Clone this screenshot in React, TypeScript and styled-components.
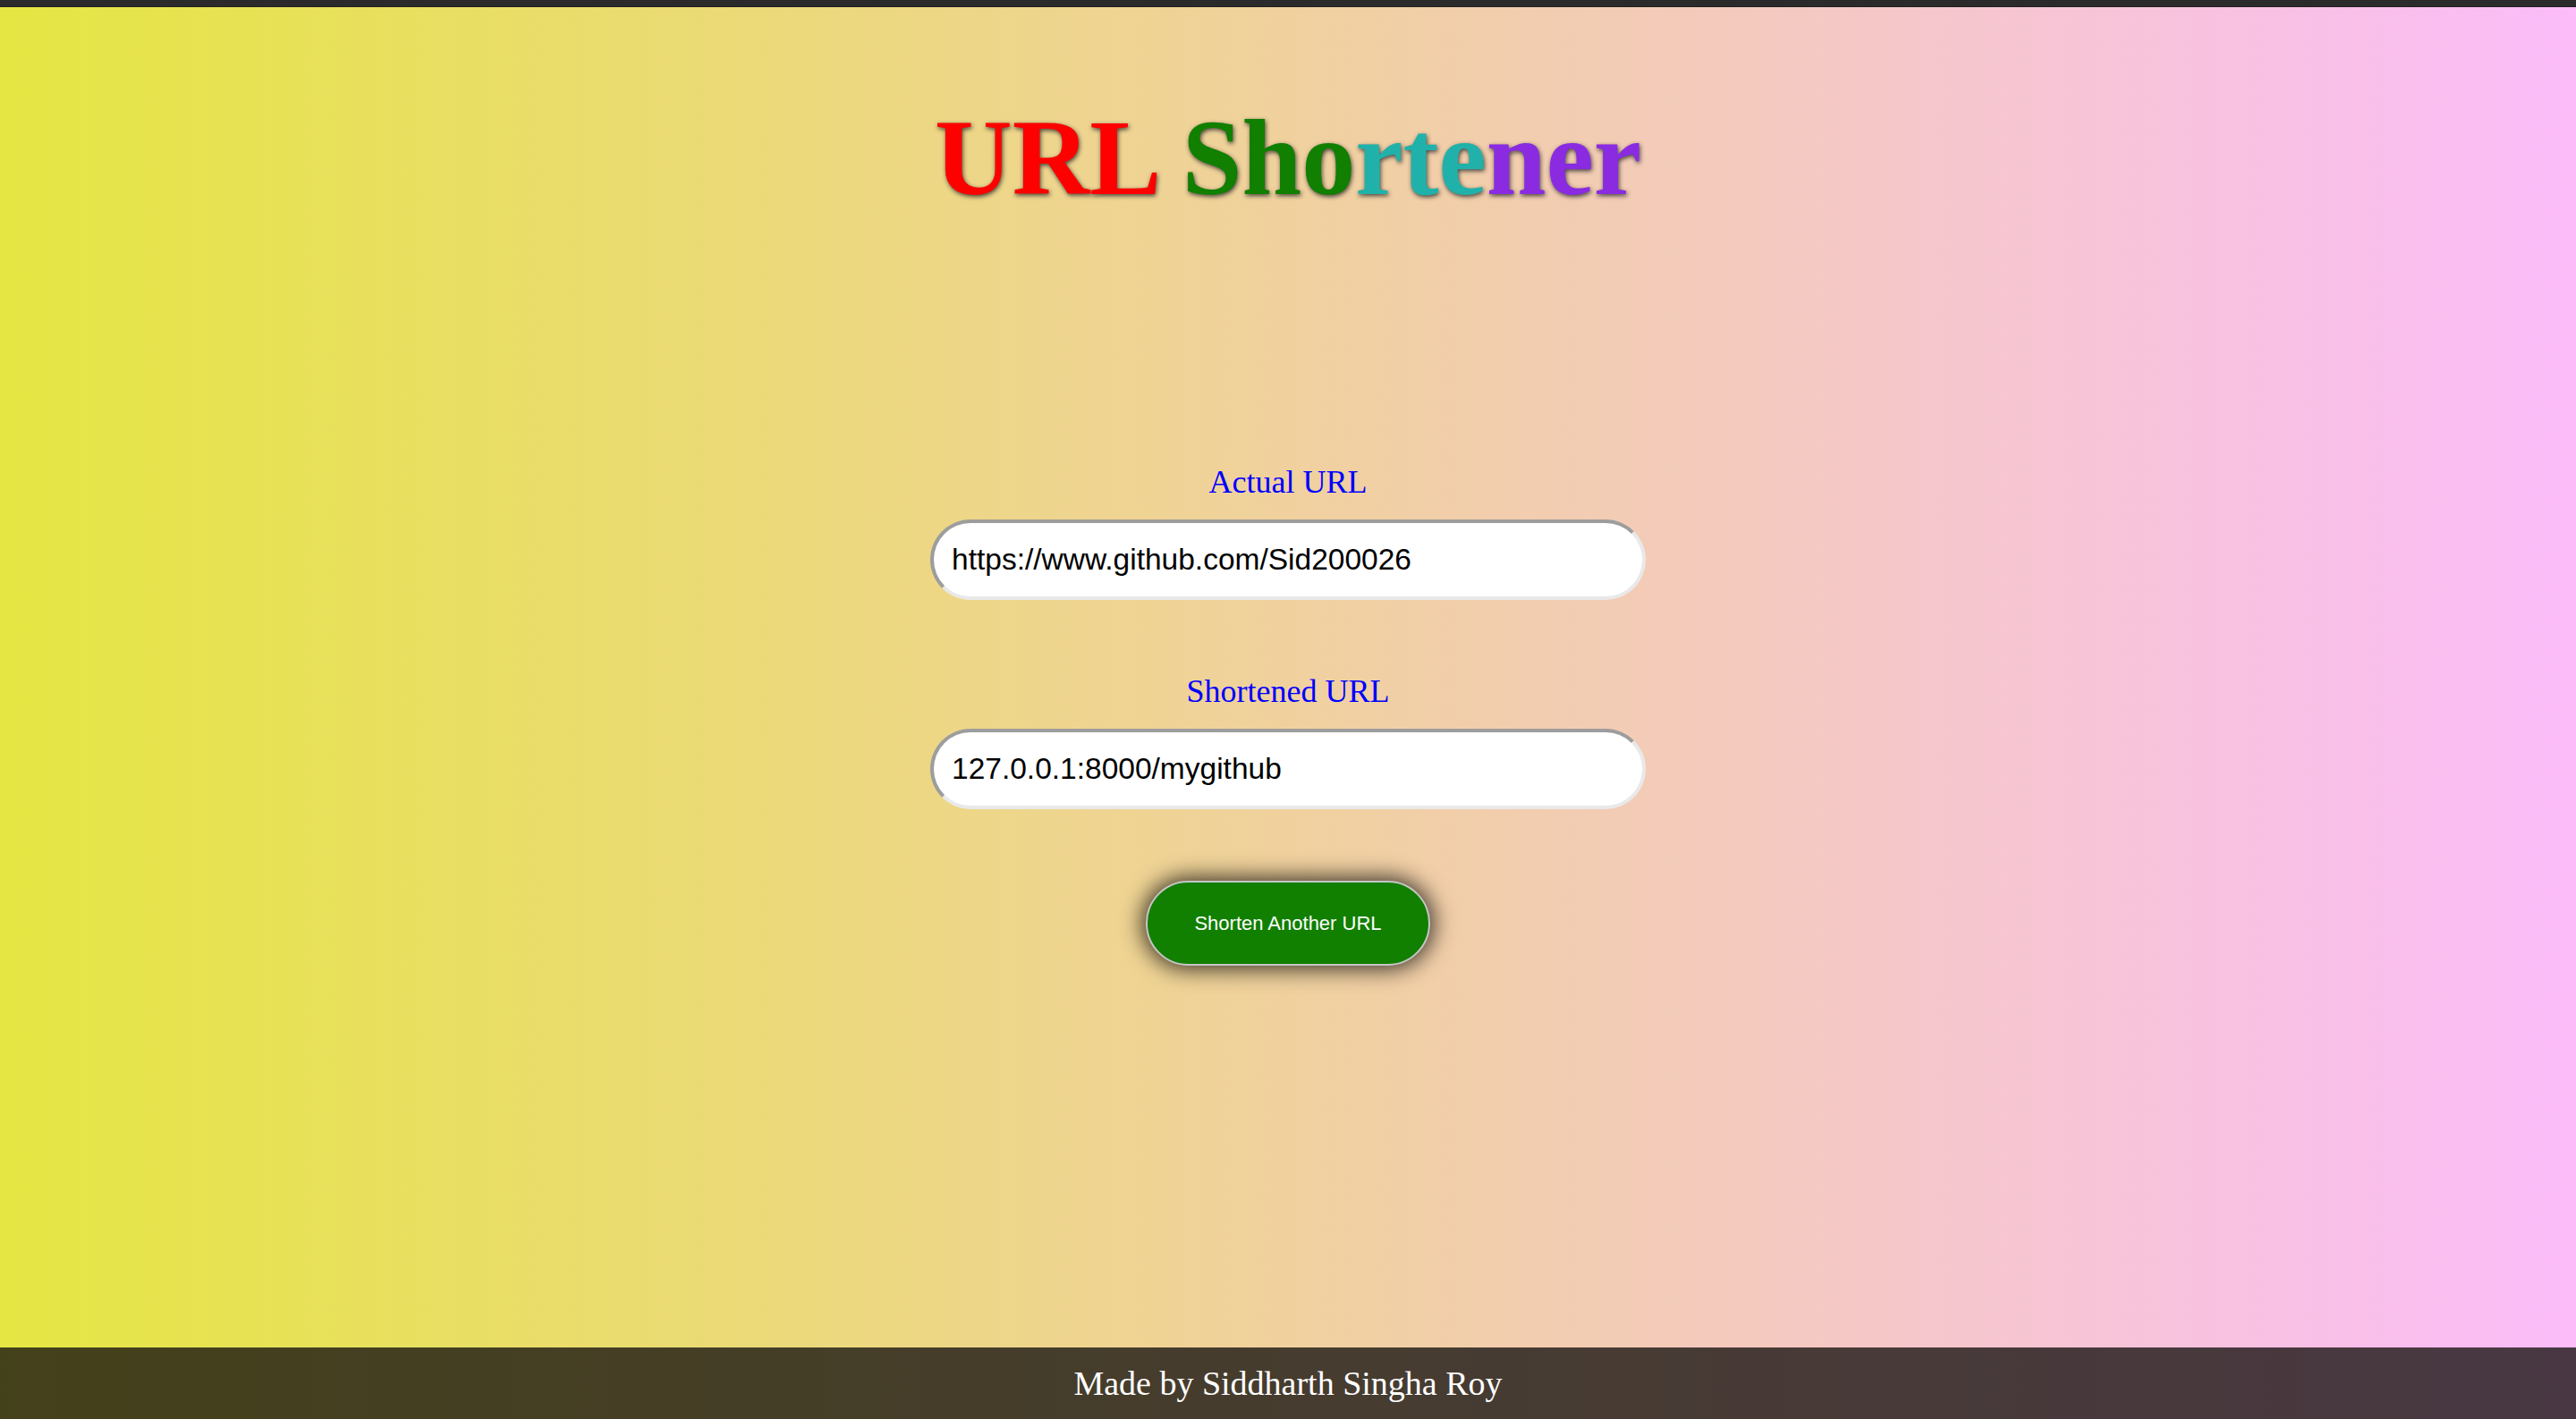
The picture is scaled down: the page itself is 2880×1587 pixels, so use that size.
import React from "react";
import styled, { createGlobalStyle } from "styled-components";

const GlobalStyle = createGlobalStyle`
  html, body {
    margin: 0;
    padding: 0;
  }
  body {
    min-height: 100vh;
    background: linear-gradient(to right, #e5e643 0%, #fbbcf9 100%);
    font-family: "Liberation Serif", "Times New Roman", serif;
  }
`;

const Page = styled.div`
  min-height: 100vh;
  display: flex;
  flex-direction: column;
  align-items: stretch;
`;

const TopBar = styled.div`
  height: 8px;
  background: #2b2b2b;
  border-bottom: 1px solid #1e1e1e;
  box-sizing: border-box;
`;

const Main = styled.main`
  display: flex;
  flex-direction: column;
  align-items: center;
  flex: 1;
`;

const Title = styled.h1`
  margin: 108.5px 0 0;
  font-family: "Liberation Serif", "Times New Roman", serif;
  font-weight: bold;
  font-size: 120px;
  line-height: 120px;
  text-shadow: 1px 2px 5px rgba(40, 40, 40, 0.85);
  text-align: center;
  white-space: nowrap;
`;

const Part = styled.span<{ $color: string }>`
  color: ${(p) => p.$color};
`;

const Form = styled.form`
  margin-top: 284.5px;
  display: flex;
  flex-direction: column;
  align-items: center;
  gap: 84px;
`;

const Field = styled.div`
  display: flex;
  flex-direction: column;
  align-items: center;
  gap: 24px;
`;

const Label = styled.label`
  font-family: "Liberation Serif", "Times New Roman", serif;
  font-size: 36px;
  line-height: 36px;
  color: #0000ff;
`;

const Input = styled.input`
  box-sizing: border-box;
  width: 800px;
  height: 90px;
  border-radius: 45px;
  border: 4px solid;
  border-color: #9d9d9d #e9e9e9 #e9e9e9 #9d9d9d;
  background: #ffffff;
  padding: 0 20px;
  font-family: "Liberation Sans", Arial, sans-serif;
  font-size: 33.5px;
  color: #000000;
  outline: none;
`;

const Button = styled.button`
  box-sizing: border-box;
  margin-top: -4px;
  width: 318px;
  height: 95px;
  border-radius: 48px;
  border: 2px solid #c6c6c6;
  background: #117f00;
  color: #ffffff;
  font-family: "Liberation Sans", Arial, sans-serif;
  font-size: 22px;
  box-shadow: 0 0 24px 4px rgba(0, 0, 0, 0.75);
  cursor: pointer;
`;

const Footer = styled.footer`
  height: 80px;
  display: flex;
  align-items: center;
  justify-content: center;
  background: rgba(22, 18, 16, 0.78);
  color: #ffffff;
  font-family: "Liberation Serif", "Times New Roman", serif;
  font-size: 38px;
`;

export default function App() {
  return (
    <>
      <GlobalStyle />
      <Page>
        <TopBar />
        <Main>
          <Title>
            <Part $color="#ff0000">URL</Part>{" "}
            <Part $color="#117f00">Sho</Part>
            <Part $color="#20b2aa">rte</Part>
            <Part $color="#8a2be2">ner</Part>
          </Title>
          <Form onSubmit={(e) => e.preventDefault()}>
            <Field>
              <Label htmlFor="actual">Actual URL</Label>
              <Input id="actual" defaultValue="https://www.github.com/Sid200026" />
            </Field>
            <Field>
              <Label htmlFor="short">Shortened URL</Label>
              <Input id="short" defaultValue="127.0.0.1:8000/mygithub" />
            </Field>
            <Button type="button">Shorten Another URL</Button>
          </Form>
        </Main>
        <Footer>Made by Siddharth Singha Roy</Footer>
      </Page>
    </>
  );
}
